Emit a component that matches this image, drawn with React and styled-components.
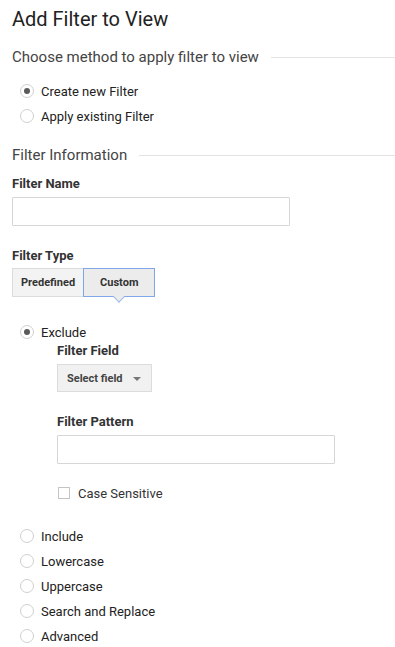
import styled, {createGlobalStyle} from "styled-components"

const GlobalStyle = createGlobalStyle`
  body {
    margin: 0;
    background: #fff;
    font-family: Roboto, "Liberation Sans", Arial, sans-serif;
    color: #222;
  }
`

export default function App() {
  return (
    <Page>
      <GlobalStyle/>
      <Title>Add Filter to View</Title>

      <SectionHeading>Choose method to apply filter to view</SectionHeading>
      <RadioList>
        <RadioRow><Radio checked/>Create new Filter</RadioRow>
        <RadioRow><Radio/>Apply existing Filter</RadioRow>
      </RadioList>

      <SectionHeading $gap="19px">Filter Information</SectionHeading>
      <FieldLabel $top="10px">Filter Name</FieldLabel>
      <TextInput $width="278px"/>

      <FieldLabel $top="21px">Filter Type</FieldLabel>
      <ButtonGroup>
        <SegButton>Predefined</SegButton>
        <SegButton $active>Custom</SegButton>
      </ButtonGroup>

      <TypeList>
        <RadioRow><Radio checked/>Exclude</RadioRow>
        <SubFields>
          <FieldLabel $top="0">Filter Field</FieldLabel>
          <SelectButton>
            Select field
            <Caret/>
          </SelectButton>

          <FieldLabel $top="21px">Filter Pattern</FieldLabel>
          <TextInput $width="278px"/>

          <CheckRow>
            <CheckBox/>
            Case Sensitive
          </CheckRow>
        </SubFields>

        <OtherTypes>
          <RadioRow><Radio/>Include</RadioRow>
          <RadioRow><Radio/>Lowercase</RadioRow>
          <RadioRow><Radio/>Uppercase</RadioRow>
          <RadioRow><Radio/>Search and Replace</RadioRow>
          <RadioRow><Radio/>Advanced</RadioRow>
        </OtherTypes>
      </TypeList>
    </Page>
  )
}

const Page = styled.div`
  padding: 0 0 8px 12px;
  width: 383px;
`
const Title = styled.h1`
  margin: 0;
  padding-top: 7px;
  font-size: 20px;
  line-height: 24px;
  font-weight: 400;
  color: #222;
`
const SectionHeading = styled.h2`
  display: flex;
  align-items: center;
  margin: ${(props) => props.$gap || "16px"} 0 0 0;
  font-size: 15px;
  line-height: 20px;
  font-weight: 400;
  color: #444;

  &::after {
    content: "";
    flex: 1;
    height: 1px;
    margin-left: 12px;
    background: #e3e3e3;
  }
`
const RadioList = styled.div`
  display: flex;
  flex-direction: column;
  gap: 5px;
  margin-top: 14px;
`
const RadioRow = styled.label`
  display: flex;
  align-items: center;
  height: 20px;
  padding-left: 8px;
  font-size: 13px;
  color: #222;
`
const Radio = styled.span`
  position: relative;
  box-sizing: border-box;
  width: 14px;
  height: 14px;
  margin-right: 7px;
  border: 1px solid #cfcfcf;
  border-radius: 50%;
  background: #fff;

  &::after {
    content: "";
    display: ${(props) => (props.checked ? "block" : "none")};
    position: absolute;
    top: 3px;
    left: 3px;
    width: 6px;
    height: 6px;
    border-radius: 50%;
    background: #5a5a5a;
  }
`
const FieldLabel = styled.div`
  margin-top: ${(props) => props.$top || "14px"};
  font-size: 13px;
  line-height: 18px;
  font-weight: 700;
  color: #333;
`
const TextInput = styled.input`
  display: block;
  box-sizing: border-box;
  width: ${(props) => props.$width};
  height: 29px;
  margin-top: 4px;
  border: 1px solid #d6d6d6;
  border-radius: 1px;
  background: #fff;
`
const ButtonGroup = styled.div`
  display: flex;
  margin-top: 3px;
`
const SegButton = styled.div`
  position: relative;
  box-sizing: border-box;
  height: 29px;
  padding: 0 ${(props) => (props.$active ? "16px" : "8px")};
  display: flex;
  align-items: center;
  font-size: 11px;
  font-weight: 700;
  color: #333;
  background: ${(props) => (props.$active ? "#ececec" : "#f3f3f3")};
  border: 1px solid ${(props) => (props.$active ? "#7fa6e6" : "#dcdcdc")};
  margin-left: ${(props) => (props.$active ? "-1px" : "0")};

  &::after {
    content: "";
    display: ${(props) => (props.$active ? "block" : "none")};
    position: absolute;
    left: 50%;
    bottom: -5px;
    width: 7px;
    height: 7px;
    margin-left: -4px;
    background: #ececec;
    border-right: 1px solid #9fbbe9;
    border-bottom: 1px solid #9fbbe9;
    transform: rotate(45deg);
  }
`
const TypeList = styled.div`
  margin-top: 25px;
`
const SubFields = styled.div`
  padding-left: 45px;
`
const SelectButton = styled.div`
  box-sizing: border-box;
  display: flex;
  align-items: center;
  justify-content: space-between;
  width: 95px;
  height: 28px;
  margin-top: 4px;
  padding: 0 10px 0 9px;
  font-size: 11px;
  font-weight: 700;
  color: #444;
  background: #f1f1f1;
  border: 1px solid #dcdcdc;
`
const Caret = styled.span`
  width: 0;
  height: 0;
  margin-top: 2px;
  border-left: 4px solid transparent;
  border-right: 4px solid transparent;
  border-top: 4px solid #777;
`
const CheckRow = styled.label`
  display: flex;
  align-items: center;
  height: 20px;
  margin-top: 19px;
  font-size: 13px;
  color: #333;
`
const CheckBox = styled.span`
  box-sizing: border-box;
  width: 12px;
  height: 12px;
  margin: 0 8px 0 1px;
  border: 1px solid #c4c4c4;
  background: #fff;
`
const OtherTypes = styled.div`
  display: flex;
  flex-direction: column;
  gap: 5px;
  margin-top: 23px;
`
